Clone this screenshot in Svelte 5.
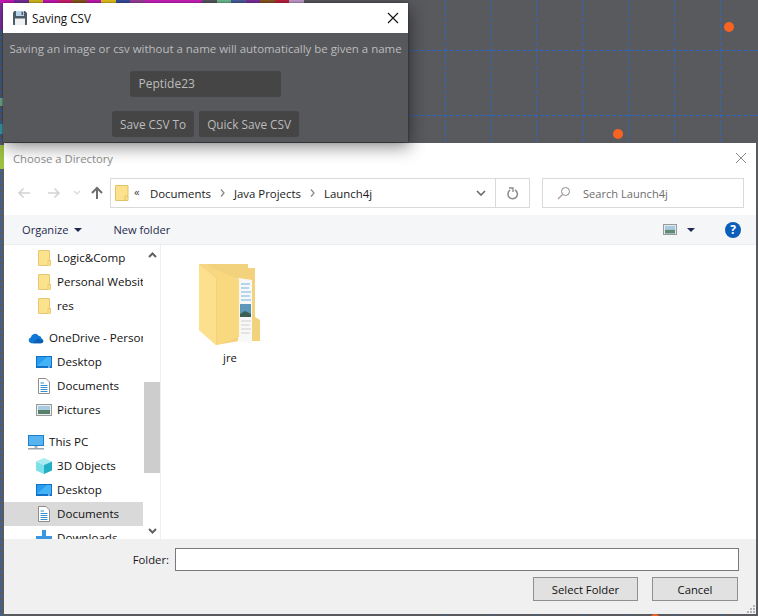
<script>
    const grid_x = [445.5, 491.5, 536.5, 582.5, 628.5, 674.5, 720.5];
    const grid_y = [50.5, 115.5];
    const dots = [{ x: 729, y: 27 }, { x: 618, y: 134 }, { x: 655, y: 619 }];
    const crumbs = ["Documents", "Java Projects", "Launch4j"];

    // colored junk peeking out behind the top window
    const strip = ["#c818b8", "#7a2ea0", "#d8c020", "#c818b8", "#d02070", "#8a5a20", "#c818b8", "#e8c820", "#3a50a0", "#a040a0", "#d020c0", "#d020c0", "#d020c0", "#d020c0", "#5a5b60", "#70c090", "#4a60a0", "#8030a0", "#8a5a20", "#c02040", "#c8a0d0", "#5a5b60"];

    const nav_items = [
        { label: "Logic&Comp", icon: "folder" },
        { label: "Personal Website", icon: "folder" },
        { label: "res", icon: "folder" },
        { label: "OneDrive - Personal", icon: "cloud", top: true },
        { label: "Desktop", icon: "desktop" },
        { label: "Documents", icon: "doc" },
        { label: "Pictures", icon: "pic" },
        { label: "This PC", icon: "pc", top: true },
        { label: "3D Objects", icon: "cube" },
        { label: "Desktop", icon: "desktop" },
        { label: "Documents", icon: "doc", selected: true },
        { label: "Downloads", icon: "down" }
    ];
</script>

<main class="desktop">
    <svg class="backdrop" viewBox="0 0 758 616" aria-hidden="true">
        {#each grid_x as x}
            <line x1={x} x2={x} y1="0" y2="616" stroke="#2a66cc" stroke-opacity=".85" stroke-width="1" stroke-dasharray="4 2" />
        {/each}
        {#each grid_y as y}
            <line x1="408" x2="758" y1={y} y2={y} stroke="#2a66cc" stroke-opacity=".85" stroke-width="1" stroke-dasharray="4 2" />
        {/each}
        {#each dots as dot}
            <circle cx={dot.x} cy={dot.y} r="5" fill="#f76322" />
        {/each}
        <line x1="1.5" x2="1.5" y1="0" y2="616" stroke="#2a66cc" stroke-width="1" stroke-dasharray="4 2" />
        <rect x="0" y="145" width="4" height="24" fill="#9cc040" />
        <rect x="0" y="124" width="3" height="10" fill="#3aa0b0" />
        <rect x="0" y="98" width="3" height="8" fill="#70b090" />
        <rect x="0" y="0" width="3" height="30" fill="#8030a0" />
    </svg>

    <div class="strip">
        {#each strip as colour}
            <span style:background={colour}></span>
        {/each}
    </div>

    <section class="dir-window">
        <header class="dir-title">
            <span>Choose a Directory</span>
            <svg width="12" height="12" viewBox="0 0 12 12">
                <path d="M1 1l10 10M11 1 1 11" stroke="#8a8a8a" stroke-width="1" fill="none" />
            </svg>
        </header>

        <div class="nav-bar">
            <div class="arrows">
                <svg width="14" height="12" viewBox="0 0 14 12"><path d="M13 6H2M6.500 1.500 2 6l4.500 4.500" stroke="#d2d2d2" stroke-width="1.500" fill="none" /></svg>
                <svg width="14" height="12" viewBox="0 0 14 12"><path d="M1 6h11M7.500 1.500 12 6l-4.500 4.500" stroke="#d2d2d2" stroke-width="1.500" fill="none" /></svg>
                <svg width="8" height="6" viewBox="0 0 8 6"><path d="M1 1l3 3 3-3" stroke="#d8d8d8" stroke-width="1.200" fill="none" /></svg>
                <svg width="12" height="14" viewBox="0 0 12 14"><path d="M6 13V2M1 7l5-5 5 5" stroke="#6e6e6e" stroke-width="2" fill="none" /></svg>
            </div>
            <div class="address">
                <svg class="addr-folder" width="14" height="16" viewBox="0 0 14 16"><path d="M.5.500h12.500v15H.5z" fill="#fde28e" stroke="#e2c368" /><path d="M10 15.500V11h3" fill="none" stroke="#e2c368" /></svg>
                <span class="chev-left">«</span>
                {#each crumbs as crumb, i}
                    <span class="crumb">{crumb}</span>
                    {#if i < crumbs.length - 1}
                        <svg width="5" height="8" viewBox="0 0 5 8"><path d="M1 .5 4 4 1 7.500" stroke="#8a8a8a" stroke-width="1.300" fill="none" /></svg>
                    {/if}
                {/each}
                <svg class="addr-drop" width="10" height="6" viewBox="0 0 10 6"><path d="M1 1l4 4 4-4" stroke="#6a6a6a" stroke-width="1.600" fill="none" /></svg>
                <span class="refresh">
                    <svg width="12" height="13" viewBox="0 0 12 13"><path d="M3 3.200A4.700 4.700 0 1 0 8 3" stroke="#8a8a8a" stroke-width="1.500" fill="none" /><path d="M2 1h4v4" stroke="#8a8a8a" stroke-width="1.300" fill="none" /></svg>
                </span>
            </div>
            <div class="search">
                <svg width="14" height="14" viewBox="0 0 14 14"><circle cx="8.500" cy="5.500" r="4" stroke="#8a8a8a" fill="none" /><path d="M5.500 8.500 1 13" stroke="#b09a90" stroke-width="1.200" /></svg>
                <span>Search Launch4j</span>
            </div>
        </div>

        <div class="toolbar">
            <span class="tool">Organize</span>
            <i class="caret"></i>
            <span class="tool new-folder">New folder</span>
            <svg class="view-icon" width="14" height="11" viewBox="0 0 14 11">
                <rect x=".5" y=".5" width="13" height="10" fill="#dfe9ef" stroke="#9a9a9a" />
                <rect x="2" y="5.500" width="10" height="4" fill="#5f8a74" />
                <rect x="2" y="2" width="10" height="3.500" fill="#a9cbe2" />
            </svg>
            <i class="caret view-caret"></i>
            <span class="help">?</span>
        </div>

        <div class="panes">
            <nav class="tree">
                {#each nav_items as item}
                    <div class="tree-row" class:top={item.top} class:selected={item.selected}>
                        <span class="tree-icon">
                            {#if item.icon === "folder"}
                                <svg width="13" height="16" viewBox="0 0 13 16"><path d="M.5.500H11.500V15.500H.5z" fill="#fde28e" stroke="#e6c873" /><path d="M10 15.500V10.500H12.500V15.500" fill="#fde28e" stroke="#e6c873" /></svg>
                            {:else if item.icon === "cloud"}
                                <svg width="17" height="12" viewBox="0 0 17 12"><path d="M3.500 11.500A3 3 0 0 1 3 5.600 4.500 4.500 0 0 1 11.200 3.500 3.800 3.800 0 0 1 14.500 6.500 2.600 2.600 0 0 1 14 11.500z" fill="#0f78d4" /><path d="M5 11.500 10.500 6.500 16.500 9A2.600 2.600 0 0 1 14 11.500z" fill="#0a5fb0" /></svg>
                            {:else if item.icon === "desktop"}
                                <svg width="16" height="12" viewBox="0 0 16 12"><rect x="0" y="0" width="16" height="12" fill="#0f72c8" /><rect x="1" y="1" width="14" height="9" fill="#2a9cf0" /><path d="M1 10 11 1h4v9z" fill="#43b2f6" /><rect x="12" y="10.500" width="2" height="1" fill="#cfe6f7" /></svg>
                            {:else if item.icon === "doc"}
                                <svg width="12" height="16" viewBox="0 0 12 16"><path d="M.5.500H8L11.500 4V15.500H.5z" fill="#fff" stroke="#8d8d8d" /><path d="M2.500 5H6M2.500 7.500h7M2.500 9.500h7M2.500 11.500h7M2.500 13.500h7" stroke="#3b8ec9" /></svg>
                            {:else if item.icon === "pic"}
                                <svg width="16" height="12" viewBox="0 0 16 12"><rect x=".5" y=".5" width="15" height="11" fill="#e9eef1" stroke="#9a9a9a" /><rect x="2" y="2" width="12" height="4" fill="#a9cbe2" /><rect x="2" y="6" width="12" height="4" fill="#56806a" /></svg>
                            {:else if item.icon === "pc"}
                                <svg width="16" height="15" viewBox="0 0 16 15"><rect x=".5" y=".5" width="15" height="10" fill="#56b4f0" stroke="#1f80c8" /><rect x="6.500" y="11" width="3" height="2" fill="#aab4bc" /><rect x="0" y="13" width="16" height="1.500" fill="#9aa4ac" /></svg>
                            {:else if item.icon === "cube"}
                                <svg width="16" height="16" viewBox="0 0 16 16"><path d="M8 0 16 3.500 8 7 0 3.500z" fill="#a8ecf0" /><path d="M0 3.500 8 7v9L0 12.500z" fill="#7ee0e8" /><path d="M16 3.500 8 7v9l8-3.500z" fill="#22b0c4" /></svg>
                            {:else}
                                <svg width="16" height="16" viewBox="0 0 16 16"><rect x="6" y="0" width="4" height="10" fill="#3a96e0" /><path d="M0 6H16V13H0z" fill="#3a96e0" /></svg>
                            {/if}
                        </span>
                        <span class="tree-label">{item.label}</span>
                    </div>
                {/each}
            </nav>
            <div class="scrollbar">
                <svg class="scroll-up" width="9" height="6" viewBox="0 0 9 6"><path d="M1 5l3.500-3.500L8 5" stroke="#606060" stroke-width="2" fill="none" /></svg>
                <div class="thumb"></div>
                <svg class="scroll-down" width="9" height="6" viewBox="0 0 9 6"><path d="M1 1l3.500 3.500L8 1" stroke="#606060" stroke-width="2" fill="none" /></svg>
            </div>
            <div class="files">
                <div class="file">
                    <svg width="62" height="82" viewBox="0 0 62 82">
                        <path d="M0 0H49V4H56V53L61 56V77H40L17 81 0 66z" fill="#f3d27e" />
                        <path d="M39 14 53 16V79L39 77z" fill="#f8f8f8" />
                        <path d="M42 20H51M42 24H50M42 28H52M42 32H51M42 36H52" stroke="#6eb4e2" stroke-width="1.200" />
                        <rect x="41" y="40" width="11" height="13" fill="#5d98b8" />
                        <path d="M41 50 46 47l6 3v3H41z" fill="#3b5f55" />
                        <path d="M42 57H52M42 61H51M42 65H52M42 69H51" stroke="#cfcfcf" stroke-width="1.200" />
                        <path d="M9 3 40 15V73L18 81V14z" fill="#f9d980" />
                        <path d="M0 0 17 14V81L0 66z" fill="#fde08e" />
                        <path d="M0 0H9L17 14z" fill="#f6d583" />
                    </svg>
                    <span>jre</span>
                </div>
            </div>
        </div>

        <footer class="dir-footer">
            <div class="folder-row">
                <label for="folder-input">Folder:</label>
                <input id="folder-input" type="text" />
            </div>
            <div class="dir-actions">
                <button class="win-btn">Select Folder</button>
                <button class="win-btn">Cancel</button>
            </div>
            <svg class="grip" width="9" height="9" viewBox="0 0 9 9">
                <path d="M7 1h2v2H7zM4 4h2v2H4zM7 4h2v2H7zM1 7h2v2H1zM4 7h2v2H4zM7 7h2v2H7z" fill="#b4b4b4" />
            </svg>
        </footer>
    </section>

    <section class="save-window">
        <header class="save-title">
            <svg width="16" height="16" viewBox="0 0 16 16">
                <path d="M1 2.500 2.500 1H13l2 2v11.500l-.5.5h-13l-.5-.5z" fill="#4d5a68" />
                <rect x="4" y="1" width="8" height="5" fill="#bcd4ea" />
                <rect x="9.500" y="1.800" width="1.600" height="3.200" fill="#4d5a68" />
                <rect x="3" y="8.500" width="10" height="6.500" fill="#f2f2f2" />
            </svg>
            <span class="save-name">Saving CSV</span>
            <svg class="save-close" width="12" height="12" viewBox="0 0 12 12">
                <path d="M1 1l10 10M11 1 1 11" stroke="#111" stroke-width="1.100" fill="none" />
            </svg>
        </header>
        <div class="save-body">
            <p>Saving an image or csv without a name will automatically be given a name</p>
            <div class="name-field">Peptide23</div>
            <div class="save-actions">
                <button class="dark-btn">Save CSV To</button>
                <button class="dark-btn">Quick Save CSV</button>
            </div>
        </div>
    </section>
</main>

<style>
    :global(body) {
        margin: 0;
    }

    .desktop {
        position: relative;
        width: 758px;
        height: 616px;
        overflow: hidden;
        background: #595a5e;
        font-family: "Open Sans", "Noto Sans", sans-serif;
        font-size: 11.3px;
    }

    .backdrop {
        position: absolute;
        inset: 0;
        width: 758px;
        height: 616px;
    }

    .strip {
        position: absolute;
        left: 0;
        top: 0;
        width: 318px;
        height: 3px;
        display: flex;
    }

    .strip span {
        flex: 1;
    }

    /* save dialog */
    .save-window {
        position: absolute;
        left: 3px;
        top: 3px;
        width: 405px;
        height: 139px;
        display: flex;
        flex-direction: column;
        background: #57585c;
        box-shadow: 2px 5px 16px rgba(0, 0, 0, .45), 0 0 2px rgba(0, 0, 0, .5);
    }

    .save-title {
        height: 30px;
        box-sizing: border-box;
        padding: 0 9px;
        display: flex;
        align-items: center;
        gap: 4px;
        background: #fff;
        color: #111;
        font-size: 11.7px;
    }

    .save-close {
        margin-left: auto;
    }

    .save-body {
        flex: 1;
        display: flex;
        flex-direction: column;
        align-items: center;
        color: #bcbcbc;
        font-size: 12px;
    }

    .save-body p {
        margin: 8px 0 0;
        font-size: 11.45px;
        line-height: 16px;
        white-space: nowrap;
    }

    .name-field {
        width: 151px;
        height: 26px;
        box-sizing: border-box;
        margin: 14px 0 0 -1px;
        padding-left: 9px;
        line-height: 26px;
        background: #454545;
        border-radius: 3px;
    }

    .save-actions {
        display: flex;
        gap: 5px;
        margin-top: 14px;
    }

    .dark-btn {
        height: 26px;
        padding: 0 8px;
        border: 0;
        border-radius: 3px;
        background: #454545;
        color: #bcbcbc;
        font: inherit;
        font-size: 11.8px;
    }

    /* directory dialog */
    .dir-window {
        position: absolute;
        left: 4px;
        top: 143px;
        width: 752px;
        height: 471px;
        display: flex;
        flex-direction: column;
        background: #fff;
        color: #1a1a1a;
    }

    .dir-title {
        height: 30px;
        flex: none;
        box-sizing: border-box;
        padding: 0 9px 0 9px;
        display: flex;
        align-items: center;
        justify-content: space-between;
        color: #8c8c8c;
    }

    .nav-bar {
        height: 42px;
        flex: none;
        display: flex;
        align-items: flex-start;
        padding-top: 5px;
        box-sizing: border-box;
    }

    .arrows {
        width: 106px;
        height: 30px;
        flex: none;
        display: flex;
        align-items: center;
        gap: 16px;
        box-sizing: border-box;
        padding-left: 13px;
    }

    .arrows svg:nth-child(3) {
        margin: 0 -6px 0 -4px;
    }

    .address {
        width: 420px;
        height: 30px;
        flex: none;
        box-sizing: border-box;
        border: 1px solid #d9d9d9;
        display: flex;
        align-items: center;
        padding-left: 4px;
        gap: 9px;
        font-size: 11.4px;
    }

    .addr-folder {
        margin-right: -4px;
    }

    .chev-left {
        width: 7px;
        margin-top: -3px;
        color: #444;
    }

    .crumb {
        color: #1a1a1a;
    }

    .addr-drop {
        margin-left: auto;
    }

    .refresh {
        width: 33px;
        height: 28px;
        display: flex;
        align-items: center;
        justify-content: center;
        border-left: 1px solid #d9d9d9;
    }

    .search {
        width: 202px;
        height: 30px;
        flex: none;
        margin-left: 12px;
        box-sizing: border-box;
        border: 1px solid #d9d9d9;
        display: flex;
        align-items: center;
        gap: 12px;
        padding-left: 14px;
        color: #6d6d6d;
        font-size: 11.1px;
    }

    .toolbar {
        height: 30px;
        flex: none;
        display: flex;
        align-items: center;
        background: #f5f6f7;
        border-bottom: 1px solid #ececec;
        box-sizing: border-box;
        padding-left: 18px;
        color: #1f2a50;
        font-size: 11.1px;
    }

    .caret {
        width: 0;
        height: 0;
        margin-left: 6px;
        border-left: 4px solid transparent;
        border-right: 4px solid transparent;
        border-top: 4px solid #1f2a50;
    }

    .new-folder {
        margin-left: 31px;
    }

    .view-icon {
        margin-left: auto;
    }

    .view-caret {
        margin-left: 10px;
    }

    .help {
        width: 16px;
        height: 16px;
        margin: 0 15px 0 30px;
        border-radius: 50%;
        background: #0a5fb8;
        color: #fff;
        font-weight: 700;
        font-size: 12px;
        line-height: 16px;
        text-align: center;
    }

    .panes {
        flex: 1;
        min-height: 0;
        display: flex;
    }

    .tree {
        width: 140px;
        flex: none;
        overflow: hidden;
        padding-top: 1px;
        box-sizing: border-box;
    }

    .tree-row {
        width: 139px;
        height: 24px;
        box-sizing: border-box;
        padding-left: 32px;
        display: flex;
        align-items: center;
        gap: 5px;
        white-space: nowrap;
        color: #111;
        overflow: hidden;
        font-size: 11.6px;
    }

    .tree-row.top {
        margin-top: 8px;
        padding-left: 24px;
    }

    .tree-icon {
        width: 16px;
        flex: none;
        display: flex;
        justify-content: center;
    }

    .tree-label {
        margin-bottom: 2px;
    }

    .tree-row.selected {
        background: #d9d9d9;
    }

    .scrollbar {
        position: relative;
        width: 16px;
        flex: none;
        background: #fff;
    }

    .thumb {
        position: absolute;
        left: 0;
        right: 0;
        top: 137px;
        height: 91px;
        background: #cdcdcd;
    }

    .scroll-up,
    .scroll-down {
        position: absolute;
        left: 4px;
    }

    .scroll-up {
        top: 7px;
    }

    .scroll-down {
        bottom: 5px;
    }

    .files {
        flex: 1;
        border-left: 1px solid #f0f0f0;
        padding: 19px 0 0 38px;
    }

    .file {
        width: 62px;
        display: flex;
        flex-direction: column;
        align-items: center;
        gap: 4px;
        color: #111;
    }

    .dir-footer {
        position: relative;
        height: 75px;
        flex: none;
        box-sizing: border-box;
        background: #f0f0f0;
        padding: 9px 18px 0 0;
        display: flex;
        flex-direction: column;
        align-items: flex-end;
    }

    .folder-row {
        display: flex;
        align-items: center;
        gap: 6px;
        margin-right: -1px;
    }

    .folder-row input {
        width: 564px;
        height: 23px;
        box-sizing: border-box;
        border: 1px solid #7a7a7a;
        background: #fff;
        margin: 0;
        padding: 0;
    }

    .dir-actions {
        display: flex;
        gap: 14px;
        margin-top: 6px;
    }

    .win-btn {
        height: 24px;
        width: 105px;
        box-sizing: border-box;
        border: 1px solid #8f8f8f;
        background: #e1e1e1;
        color: #111;
        font: inherit;
        padding: 0;
    }

    .win-btn:last-child {
        width: 86px;
    }

    .grip {
        position: absolute;
        right: 1px;
        bottom: 1px;
    }
</style>
